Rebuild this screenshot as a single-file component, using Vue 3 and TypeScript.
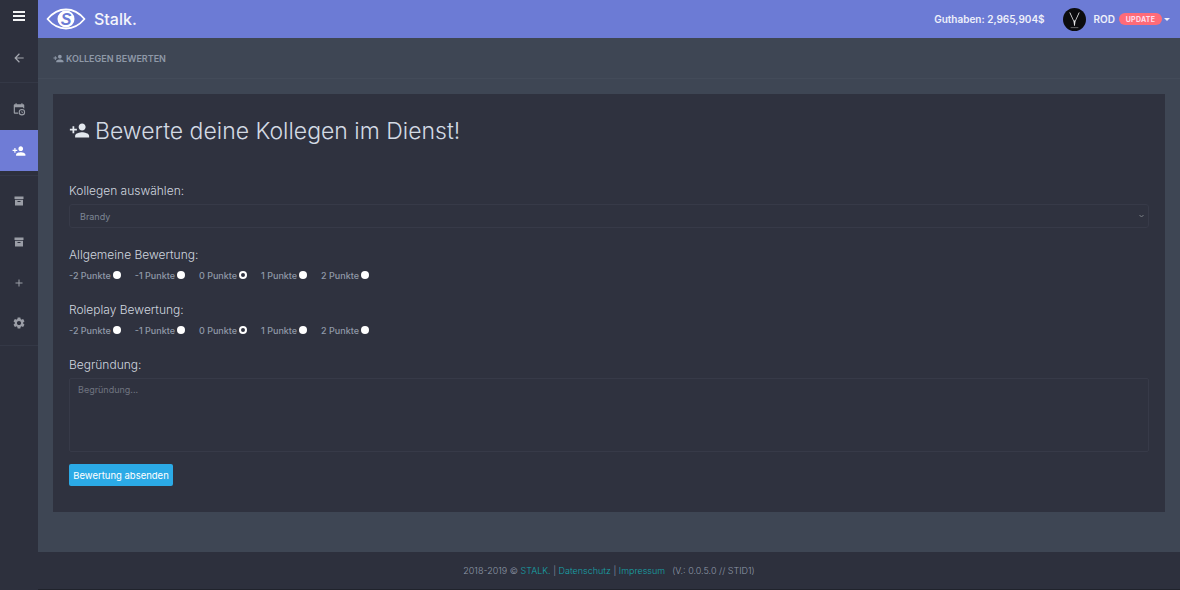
<template>
  <div class="page">
    <aside class="sidebar">
      <button class="side-toggle" type="button" aria-label="Menü">
        <span></span><span></span><span></span>
      </button>
      <div class="nav-group back">
        <svg class="nav-icon" viewBox="0 0 24 24"><path :d="icons.back" /></svg>
      </div>
      <nav class="nav-group">
        <a
          v-for="item in navItems"
          :key="item.id"
          class="nav-item"
          :class="[item.id, { active: item.active }]"
        >
          <svg v-if="item.id === 'calendar'" class="nav-icon" viewBox="0 0 24 24">
            <path d="M6 2h2v2h8V2h2v2h1.5A1.5 1.5 0 0 1 21 5.5V11a7 7 0 0 0-2-.7V9H5v9h5.3c.1.7.3 1.4.7 2H4.5A1.5 1.5 0 0 1 3 18.500v-13A1.500 1.500 0 0 1 4.500 4H6z" />
            <path fill-rule="evenodd" d="M17 12a5.500 5.500 0 1 1 0 11 5.500 5.500 0 0 1 0-11zm0 1.800a3.700 3.700 0 1 0 0 7.400 3.700 3.700 0 0 0 0-7.400zM16.300 15h1.200v2.300l1.700 1-.6 1-2.300-1.400z" />
          </svg>
          <svg v-else-if="item.id === 'person'" class="nav-icon" viewBox="0 0 24 24"><path :d="icons.personAdd" /></svg>
          <svg v-else-if="item.id === 'archive'" class="nav-icon archive-icon" viewBox="0 0 24 24">
            <path fill-rule="evenodd" d="M3 3h18v5H3zM4 9.500h16V21H4zM9 12v2h6v-2z" />
          </svg>
          <svg v-else-if="item.id === 'plus'" class="nav-icon plus-icon" viewBox="0 0 24 24"><path d="M19 13h-6v6h-2v-6H5v-2h6V5h2v6h6z" /></svg>
          <svg v-else class="nav-icon" viewBox="0 0 24 24"><path :d="icons.gear" /></svg>
        </a>
      </nav>
    </aside>

    <div class="main">
      <header class="topbar">
        <div class="brand">
          <svg class="logo" viewBox="0 0 40 22">
            <path d="M1.500 11C7 4.500 13 1.500 20 1.500S33 4.500 38.500 11C33 17.500 27 20.500 20 20.500S7 17.500 1.500 11z" fill="none" stroke="#fff" stroke-width="1.800" stroke-linejoin="round" />
            <circle cx="20" cy="11" r="8.500" fill="#fff" />
            <text x="20" y="17" text-anchor="middle" class="logo-s">S</text>
          </svg>
          <span class="brand-name">Stalk.</span>
        </div>
        <div class="account">
          <span class="balance">Guthaben: 2,965,904$</span>
          <svg class="avatar" viewBox="0 0 24 24">
            <circle cx="12" cy="12" r="12" fill="#0c0c0e" />
            <path d="M6.500 4.500 11 14l.6 4.500h.8L13 14l4.500-9.500-1.200.4L12.700 13h-1.400L7.700 4.900z" fill="#e6e6e6" />
            <rect x="8" y="20" width="8" height="1" fill="#6a6a6a" />
          </svg>
          <span class="user">ROD</span>
          <span class="badge">UPDATE</span>
          <span class="caret"></span>
        </div>
      </header>

      <div class="crumb">
        <svg class="crumb-icon" viewBox="0 0 24 24"><path :d="icons.personAdd" /></svg>
        <span>KOLLEGEN BEWERTEN</span>
      </div>

      <div class="content">
        <section class="card">
          <h1 class="title">
            <svg class="title-icon" viewBox="0 0 24 24"><path :d="icons.personAdd" /></svg>
            <span>Bewerte deine Kollegen im Dienst!</span>
          </h1>

          <form class="form" @submit.prevent>
            <div class="field first">
              <label class="label" for="colleague">Kollegen auswählen:</label>
              <div class="select-wrap">
                <select id="colleague" class="select">
                  <option>Brandy</option>
                </select>
                <svg class="chevron" viewBox="0 0 10 6"><path d="M1 1l4 4 4-4" /></svg>
              </div>
            </div>

            <div v-for="group in ratingGroups" :key="group.name" class="field rating">
              <span class="label">{{ group.label }}</span>
              <div class="radios">
                <label v-for="option in points" :key="option" class="radio">
                  <span>{{ option }} Punkte</span>
                  <input type="radio" :name="group.name" :value="option" :checked="option === 0" />
                </label>
              </div>
            </div>

            <div class="field reason">
              <label class="label" for="reason">Begründung:</label>
              <textarea id="reason" class="textarea" placeholder="Begründung..."></textarea>
            </div>

            <button class="submit" type="submit">Bewertung absenden</button>
          </form>
        </section>
      </div>

      <footer class="footer">
        <span>2018-2019 © </span><a>STALK.</a>
        <span class="pipe"> | </span><a>Datenschutz</a>
        <span class="pipe"> | </span><a>Impressum</a>
        <span class="version">(V.: 0.0.5.0 // STID1)</span>
      </footer>
    </div>
  </div>
</template>

<script setup lang="ts">
const icons = {
  back: "M20 11H7.830l5.590-5.590L12 4l-8 8 8 8 1.410-1.410L7.830 13H20v-2z",
  personAdd:
    "M15 12c2.210 0 4-1.790 4-4s-1.790-4-4-4-4 1.790-4 4 1.790 4 4 4zm-9-2V7H4v3H1v2h3v3h2v-3h3v-2H6zm9 4c-2.670 0-8 1.340-8 4v2h16v-2c0-2.660-5.330-4-8-4z",
  gear: "M19.140 12.940c.040-.300.060-.610.060-.940 0-.320-.020-.640-.070-.940l2.030-1.580c.180-.140.230-.410.120-.610l-1.920-3.320c-.120-.220-.370-.290-.590-.220l-2.390.960c-.500-.380-1.030-.700-1.620-.940l-.360-2.540c-.040-.240-.240-.410-.480-.410h-3.840c-.240 0-.430.170-.470.410l-.360 2.540c-.590.240-1.130.570-1.620.940l-2.390-.960c-.220-.080-.470 0-.590.220L2.740 8.870c-.120.210-.080.470.120.610l2.030 1.580c-.050.300-.090.630-.090.940s.020.640.070.940l-2.030 1.580c-.180.140-.230.410-.120.610l1.920 3.320c.120.220.370.290.590.220l2.390-.960c.500.380 1.030.700 1.620.940l.360 2.540c.050.240.240.410.480.410h3.840c.240 0 .440-.170.470-.410l.360-2.540c.590-.240 1.130-.560 1.620-.940l2.390.960c.220.080.470 0 .590-.220l1.920-3.320c.120-.220.070-.470-.120-.610l-2.010-1.580zM12 15.600c-1.980 0-3.600-1.620-3.600-3.600s1.620-3.600 3.600-3.600 3.600 1.620 3.600 3.600-1.620 3.600-3.600 3.600z",
};

const navItems = [
  { id: "calendar", active: false },
  { id: "person", active: true },
  { id: "archive", active: false },
  { id: "archive", active: false },
  { id: "plus", active: false },
  { id: "gear", active: false },
];

const ratingGroups = [
  { name: "general", label: "Allgemeine Bewertung:" },
  { name: "roleplay", label: "Roleplay Bewertung:" },
];

const points = [-2, -1, 0, 1, 2];
</script>

<style>
html,
body {
  margin: 0;
  background: #3e4654;
}
</style>

<style scoped>
.page {
  display: flex;
  width: 1180px;
  height: 590px;
  overflow: hidden;
  font-family: Inter, "Noto Sans", sans-serif;
  background: #3e4654;
}

.sidebar {
  flex: 0 0 38px;
  background: #2d303d;
  display: flex;
  flex-direction: column;
}

.side-toggle {
  height: 38px;
  padding: 0 0 7px;
  border: 0;
  background: none;
  display: flex;
  flex-direction: column;
  align-items: center;
  justify-content: center;
  gap: 2px;
}

.side-toggle span {
  width: 12px;
  height: 2px;
  background: #f2f3f5;
}

.back {
  height: 45px;
  align-items: center;
  justify-content: center;
  padding-bottom: 5px;
  box-sizing: border-box;
  border-bottom: 1px solid #343846;
}

.nav-group {
  display: flex;
  flex-direction: column;
}

.nav-item {
  height: 41px;
  display: flex;
  align-items: center;
  justify-content: center;
}

.nav-item.calendar {
  height: 47px;
  padding-top: 5px;
  box-sizing: border-box;
}

.nav-item.active {
  background: #6f7cd6;
  margin-bottom: 9px;
  box-shadow: 0 4px 0 #2d303d, 0 5px 0 #343846;
}

.nav-item.gear {
  height: 43px;
  box-sizing: border-box;
  border-bottom: 1px solid #343846;
  padding-bottom: 2px;
}

.nav-icon {
  width: 14px;
  height: 14px;
  fill: #9a9da6;
}

.back .nav-icon {
  fill: #a5a8b0;
}

.active .nav-icon {
  fill: #fff;
}

.archive-icon {
  width: 12px;
  height: 12px;
}

.plus-icon {
  width: 12px;
  height: 12px;
}

.main {
  flex: 1;
  min-width: 0;
  display: flex;
  flex-direction: column;
}

.topbar {
  flex: 0 0 38px;
  background: #6c7bd5;
  display: flex;
  align-items: center;
  justify-content: space-between;
  padding: 0 8px 0 8px;
  color: #fff;
}

.brand {
  display: flex;
  align-items: center;
  gap: 8px;
}

.logo {
  width: 40px;
  height: 22px;
}

.logo-s {
  font-family: "Liberation Sans", sans-serif;
  font-size: 16px;
  font-weight: 700;
  font-style: italic;
  fill: #6c7bd5;
}

.brand-name {
  font-size: 16px;
  font-weight: 500;
  letter-spacing: 0;
  color: #f4f5fb;
}

.account {
  display: flex;
  align-items: center;
  font-size: 10px;
  font-weight: 600;
  color: #eef0fa;
}

.balance {
  margin-right: 18px;
}

.avatar {
  width: 23px;
  height: 23px;
  margin-right: 8px;
}

.badge {
  margin-left: 4px;
  width: 43px;
  height: 12px;
  border-radius: 6px;
  background: #ff6b78;
  color: #fde;
  font-size: 7px;
  font-weight: 700;
  letter-spacing: 0.3px;
  display: flex;
  align-items: center;
  justify-content: center;
}

.caret {
  margin: 0 2px 0 2px;
  border-top: 3px solid #eef0fa;
  border-left: 3px solid transparent;
  border-right: 3px solid transparent;
}

.crumb {
  flex: 0 0 40px;
  display: flex;
  align-items: center;
  padding-left: 15px;
  gap: 2px;
  font-size: 9px;
  font-weight: 600;
  color: #8f99a8;
  border-bottom: 1px solid #434b59;
}

.crumb-icon {
  width: 11px;
  height: 11px;
  fill: #8f99a8;
}

.content {
  flex: 1;
  min-height: 0;
  padding: 15px 15px 0;
}

.card {
  height: 418px;
  box-sizing: border-box;
  background: #2f323f;
  padding: 0 16px;
}

.title {
  margin: 0;
  padding-top: 20px;
  height: 76px;
  box-sizing: border-box;
  display: flex;
  align-items: center;
  align-content: center;
  gap: 5px;
  font-size: 23px;
  line-height: 34px;
  font-weight: 300;
  color: #d3dae4;
  align-items: flex-start;
}

.title-icon {
  width: 21px;
  height: 21px;
  fill: #e3e8ee;
  margin-top: 6px;
}

.field {
  display: flex;
  flex-direction: column;
}

.label {
  font-size: 12px;
  line-height: 15px;
  font-weight: 300;
  color: #d0d6df;
}

.first {
  margin-top: 13px;
  gap: 6px;
}

.select-wrap {
  position: relative;
}

.select {
  appearance: none;
  display: block;
  width: 100%;
  height: 24px;
  padding: 0 10px;
  box-sizing: border-box;
  background: #2f323f;
  border: 1px solid #373a48;
  border-radius: 3px;
  font: inherit;
  font-size: 9px;
  color: #7d8694;
}

.chevron {
  position: absolute;
  right: 5px;
  top: 10px;
  width: 5px;
  height: 4px;
  fill: none;
  stroke: #7b7e85;
  stroke-width: 2;
}

.rating {
  margin-top: 19px;
  gap: 7px;
}

.rating + .rating {
  margin-top: 21px;
}

.radios {
  display: flex;
  gap: 14px;
}

.radio {
  display: flex;
  align-items: center;
  gap: 2px;
  height: 12px;
  font-size: 9px;
  font-weight: 500;
  color: #8f99a8;
}

.radio input {
  appearance: none;
  width: 8px;
  height: 8px;
  margin: 0;
  border-radius: 50%;
  background: #fff;
}

.radio input:checked {
  background: #2f323f;
  border: 2px solid #fff;
  box-sizing: border-box;
}

.reason {
  margin-top: 21px;
  gap: 6px;
}

.textarea {
  display: block;
  height: 74px;
  box-sizing: border-box;
  resize: none;
  padding: 5px 8px;
  background: #2f323f;
  border: 1px solid #373a48;
  border-radius: 2px;
  font: inherit;
  font-size: 9px;
  outline: none;
}

.textarea::placeholder {
  color: #6f7480;
}

.submit {
  display: block;
  margin-top: 12px;
  width: 104px;
  height: 22px;
  padding: 0;
  border: 0;
  border-radius: 2px;
  background: #2baae6;
  color: #fff;
  font: inherit;
  font-size: 9.500px;
  font-weight: 400;
}

.footer {
  flex: 0 0 38px;
  background: #2d303d;
  display: flex;
  align-items: center;
  justify-content: center;
  white-space: pre;
  font-size: 9px;
  font-weight: 300;
  color: #8f99a8;
  padding-bottom: 1px;
  box-sizing: border-box;
  border-bottom: 1px solid #20232c;
}

.footer a {
  color: #17a2a8;
}

.version {
  margin-left: 7px;
}
</style>
